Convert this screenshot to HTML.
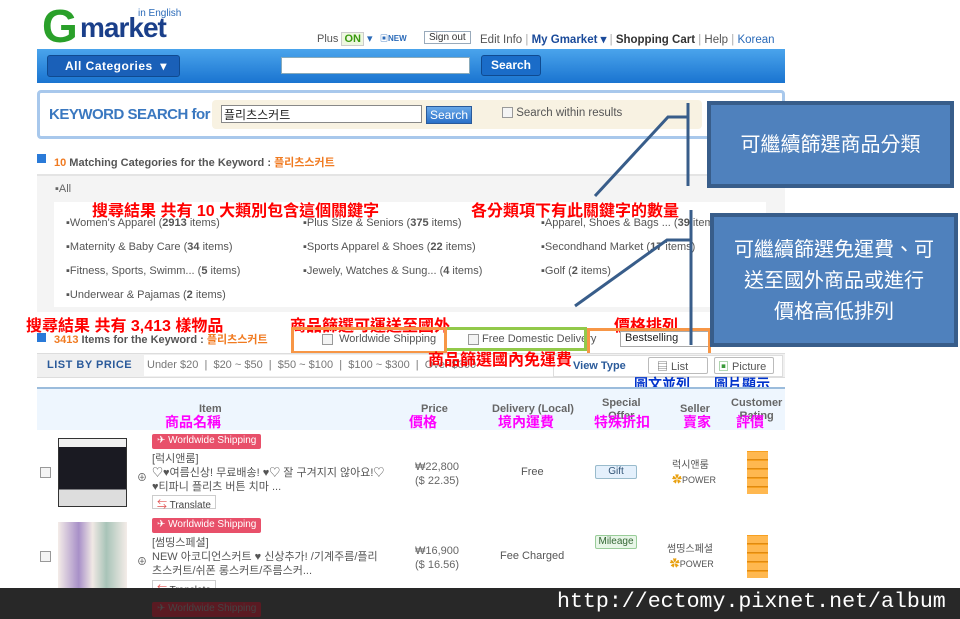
<!DOCTYPE html>
<html><head><meta charset="utf-8"><style>
*{margin:0;padding:0;box-sizing:border-box}
body{width:960px;height:619px;overflow:hidden;background:#fff;font-family:"Liberation Sans","Noto Sans CJK KR",sans-serif;font-size:11px;color:#555;position:relative}
.a{position:absolute;white-space:nowrap}
.red{color:#f00;font-family:"Liberation Sans","Noto Sans CJK TC",sans-serif;font-size:16px}
.mag{color:#f0f;font-family:"Liberation Sans","Noto Sans CJK TC",sans-serif;font-size:14px;font-weight:bold}
.blu{color:#0033cc;font-family:"Liberation Sans","Noto Sans CJK TC",sans-serif;font-size:14px;font-weight:bold}
.box{position:absolute;background:#4f81bd;border:4px solid #385d8a;color:#fff;font-family:"Liberation Sans","Noto Sans CJK TC",sans-serif;font-size:20px;text-align:center}
.cb{display:inline-block;width:11px;height:11px;border:1px solid #999;background:#f4f4f4;vertical-align:middle}
.ws{position:absolute;background:#e8506a;color:#fff;font-size:10px;padding:1px 5px;border-radius:2px;height:15px}
.tr{position:absolute;border:1px solid #ccc;font-size:10px;padding:0 4px;color:#444;height:14px}
.coin{position:absolute;left:747px;width:21px;height:43px;background:repeating-linear-gradient(#f7a020 0 1px,#ffb850 1px 8px,#e08a10 8px 9px)}
</style></head><body>
<!-- logo -->
<div class="a" style="left:42px;top:4px;font-size:46px;font-weight:bold;color:#2aa02a;line-height:44px">G</div>
<div class="a" style="left:80px;top:13px;font-size:28px;font-weight:bold;color:#1a3f8a;line-height:30px;letter-spacing:-1px">market</div>
<div class="a" style="left:138px;top:8px;font-size:10px;color:#2a6ab8">in English</div>
<div class="a" style="left:317px;top:32px;font-size:11px;color:#555">Plus <span style="background:#eef8e0;color:#3a9a10;font-weight:bold;border:1px solid #ccc;padding:0 2px">ON</span> <span style="color:#2a6ab8">▾</span></div>
<div class="a" style="left:380px;top:33px;font-size:8px;color:#2a6ab8;font-weight:bold">▣NEW</div>
<div class="a" style="left:424px;top:31px;font-size:10px;border:1px solid #9ab;padding:0 4px;color:#333">Sign out</div>
<div class="a" style="left:480px;top:32px;font-size:11.5px;color:#555">Edit Info <span style="color:#aaa">|</span> <b style="color:#1a4a9a">My Gmarket ▾</b> <span style="color:#aaa">|</span> <b style="color:#333">Shopping Cart</b> <span style="color:#aaa">|</span> Help <span style="color:#aaa">|</span> <span style="color:#2a6ab8">Korean</span></div>
<!-- blue bar -->
<div class="a" style="left:37px;top:49px;width:748px;height:34px;background:linear-gradient(#4aa4ec,#1a74d0)"></div>
<div class="a" style="left:47px;top:55px;width:133px;height:22px;background:#1a60b8;border:1px solid #0f4a90;border-radius:3px;color:#fff;font-weight:bold;font-size:12px;line-height:20px;padding-left:17px;letter-spacing:.5px">All Categories &nbsp;▾</div>
<div class="a" style="left:281px;top:57px;width:189px;height:17px;background:#fff;border:1px solid #8ab"></div>
<div class="a" style="left:481px;top:55px;width:60px;height:21px;background:#1a6cc8;border:1px solid #0f4a90;border-radius:3px;color:#fff;font-weight:bold;font-size:12px;line-height:19px;text-align:center">Search</div>
<!-- keyword search -->
<div class="a" style="left:37px;top:90px;width:748px;height:49px;border:3px solid #a8c8ec;border-radius:4px;background:#fff"></div>
<div class="a" style="left:212px;top:100px;width:490px;height:29px;background:#f8f2e2;border-radius:4px"></div>
<div class="a" style="left:49px;top:106px;font-size:15px;font-weight:bold;color:#3a78c0;letter-spacing:-.5px">KEYWORD SEARCH for</div>
<div class="a" style="left:221px;top:105px;width:201px;height:18px;background:#fff;border:1px solid #888;font-size:12px;color:#222;padding-left:2px">플리츠스커트</div>
<div class="a" style="left:426px;top:106px;width:46px;height:18px;background:linear-gradient(#6aa8e8,#2a70c8);border:1px solid #2a5a9a;color:#fff;font-size:12px;line-height:16px;text-align:center">Search</div>
<div class="a" style="left:502px;top:107px;font-size:11.5px;color:#555"><span class="cb"></span> Search within results</div>
<!-- matching categories -->
<div class="a" style="left:37px;top:154px;width:9px;height:9px;background:#2a7ad8"></div>
<div class="a" style="left:54px;top:154px;font-size:11px;font-weight:bold;color:#555"><span style="color:#f07a20">10</span> Matching Categories for the Keyword : <span style="color:#f07a20">플리츠스커트</span></div>
<div class="a" style="left:37px;top:174px;width:748px;height:2px;background:#e4e4e4"></div>
<div class="a" style="left:37px;top:176px;width:748px;height:136px;background:#f4f4f4"></div>
<div class="a" style="left:55px;top:183px;font-size:11px;color:#666">▪All</div>
<div class="a" style="left:54px;top:202px;width:712px;height:105px;background:#fff"></div>
<div class="a" style="left:66px;top:211px;font-size:11px;color:#555;line-height:24px">
▪Women's Apparel (<b>2913</b> items)<br>▪Maternity &amp; Baby Care (<b>34</b> items)<br>▪Fitness, Sports, Swimm... (<b>5</b> items)<br>▪Underwear &amp; Pajamas (<b>2</b> items)</div>
<div class="a" style="left:303px;top:211px;font-size:11px;color:#555;line-height:24px">
▪Plus Size &amp; Seniors (<b>375</b> items)<br>▪Sports Apparel &amp; Shoes (<b>22</b> items)<br>▪Jewely, Watches &amp; Sung... (<b>4</b> items)</div>
<div class="a" style="left:541px;top:211px;font-size:11px;color:#555;line-height:24px">
▪Apparel, Shoes &amp; Bags ... (<b>39</b> items)<br>▪Secondhand Market (<b>17</b> items)<br>▪Golf (<b>2</b> items)</div>
<div class="a red" style="left:92px;top:197px;font-weight:bold">搜尋結果 共有 10 大類別包含這個關鍵字</div>
<div class="a red" style="left:471px;top:197px;font-weight:bold">各分類項下有此關鍵字的數量</div>
<!-- items row -->
<div class="a red" style="left:26px;top:312px;font-weight:bold">搜尋結果 共有 3,413 樣物品</div>
<div class="a red" style="left:290px;top:312px;font-weight:bold">商品篩選可運送至國外</div>
<div class="a red" style="left:614px;top:312px;font-weight:bold">價格排列</div>
<div class="a" style="left:37px;top:333px;width:9px;height:9px;background:#2a7ad8"></div>
<div class="a" style="left:54px;top:331px;font-size:11px;font-weight:bold;color:#555"><span style="color:#f07a20">3413</span> Items for the Keyword : <span style="color:#f07a20">플리츠스커트</span></div>
<div class="a" style="left:322px;top:333px;font-size:11px;color:#555"><span class="cb"></span> &nbsp;Worldwide Shipping</div>
<div class="a" style="left:468px;top:333px;font-size:11px;color:#555"><span class="cb"></span> Free Domestic Delivery</div>
<div class="a" style="left:620px;top:331px;width:90px;height:16px;border:1px solid #aaa;background:#fff;font-size:11px;color:#222;padding-left:4px">Bestselling</div>
<div class="a" style="left:291px;top:327px;width:156px;height:27px;border:3px solid #f79646"></div>
<div class="a" style="left:447px;top:327px;width:140px;height:24px;border:3px solid #92c94a;border-left:none"></div>
<div class="a" style="left:587px;top:328px;width:124px;height:28px;border:3px solid #f79646"></div>
<!-- list by price -->
<div class="a" style="left:37px;top:353px;width:748px;height:25px;background:#f0f0f0;border-top:1px solid #ddd;border-bottom:1px solid #ddd"></div>
<div class="a" style="left:47px;top:359px;font-size:11px;font-weight:bold;color:#2a5a9a;letter-spacing:.5px">LIST BY PRICE</div>
<div class="a" style="left:144px;top:355px;width:425px;height:21px;background:#fff"></div>
<div class="a" style="left:147px;top:359px;font-size:11px;color:#777">Under $20 &nbsp;| &nbsp;$20 ~ $50 &nbsp;| &nbsp;$50 ~ $100 &nbsp;| &nbsp;$100 ~ $300 &nbsp;| &nbsp;Over $300</div>
<div class="a" style="left:553px;top:355px;width:230px;height:22px;background:#fff;border:1px solid #ddd"></div>
<div class="a" style="left:573px;top:360px;font-size:11px;font-weight:bold;color:#2a5a9a">View Type</div>
<div class="a" style="left:648px;top:357px;width:60px;height:17px;border:1px solid #bbb;border-radius:2px;background:#fff;font-size:11px;padding-left:8px">▤ List</div>
<div class="a" style="left:714px;top:357px;width:60px;height:17px;border:1px solid #bbb;border-radius:2px;background:#fff;font-size:11px;padding-left:3px"><span style="color:#3a9a3a">▣</span> Picture</div>
<div class="a red" style="left:428px;top:346px;font-weight:bold">商品篩選國內免運費</div>
<div class="a blu" style="left:634px;top:374px">圖文並列</div>
<div class="a blu" style="left:714px;top:374px">圖片顯示</div>
<!-- table header -->
<div class="a" style="left:37px;top:387px;width:748px;height:43px;background:#eef6fe;border-top:2px solid #9bbcdc"></div>
<div class="a" style="left:199px;top:403px;font-size:11px;font-weight:bold;color:#666">Item</div>
<div class="a" style="left:421px;top:403px;font-size:11px;font-weight:bold;color:#666">Price</div>
<div class="a" style="left:492px;top:403px;font-size:11px;font-weight:bold;color:#666">Delivery (Local)</div>
<div class="a" style="left:602px;top:397px;font-size:11px;font-weight:bold;color:#666;text-align:center;line-height:13px">Special<br>Offer</div>
<div class="a" style="left:680px;top:403px;font-size:11px;font-weight:bold;color:#666">Seller</div>
<div class="a" style="left:731px;top:397px;font-size:11px;font-weight:bold;color:#666;text-align:center;line-height:13px">Customer<br>Rating</div>
<div class="a mag" style="left:165px;top:412px">商品名稱</div>
<div class="a mag" style="left:409px;top:412px">價格</div>
<div class="a mag" style="left:498px;top:412px">境內運費</div>
<div class="a mag" style="left:594px;top:412px">特殊折扣</div>
<div class="a mag" style="left:683px;top:412px">賣家</div>
<div class="a mag" style="left:736px;top:412px">評價</div>
<!-- row 1 -->
<div class="a" style="left:40px;top:466px"><span class="cb"></span></div>
<div class="a" style="left:58px;top:438px;width:69px;height:69px;border:1px solid #333;background:linear-gradient(#f0f0f0 0 12%,#1a1a22 12% 75%,#ddd 75%)"></div>
<div class="a" style="left:137px;top:469px;font-size:10px">⊕</div>
<div class="ws" style="left:152px;top:434px">✈ Worldwide Shipping</div>
<div class="a" style="left:152px;top:452px;font-size:11px;color:#555;line-height:14px">[럭시앤룸]<br>♡♥여름신상! 무료배송! ♥♡ 잘 구겨지지 않아요!♡<br>♥티파니 플리츠 버튼 치마 ...</div>
<div class="tr" style="left:152px;top:495px"><span style="color:#e05050">⇆</span> Translate</div>
<div class="a" style="left:415px;top:460px;font-size:11px;color:#666;text-align:center;line-height:14px">₩22,800<br>($ 22.35)</div>
<div class="a" style="left:521px;top:466px;font-size:11px;color:#555">Free</div>
<div class="a" style="left:595px;top:465px;width:42px;height:14px;border:1px solid #9bc;background:#e4f0fc;border-radius:2px;font-size:10px;text-align:center;color:#357">Gift</div>
<div class="a" style="left:672px;top:459px;font-size:10px;color:#555;line-height:14px">럭시앤룸<br><span style="color:#e8a010">✿</span><span style="font-size:9px">POWER</span></div>
<div class="coin" style="top:451px"></div>
<!-- row 2 -->
<div class="a" style="left:40px;top:550px"><span class="cb"></span></div>
<div class="a" style="left:58px;top:522px;width:69px;height:66px;background:linear-gradient(90deg,#f4ece8,#a890c8 30%,#f0e8e4 50%,#a8c4b8 70%,#f4ece8)"></div>
<div class="a" style="left:137px;top:553px;font-size:10px">⊕</div>
<div class="ws" style="left:152px;top:518px">✈ Worldwide Shipping</div>
<div class="a" style="left:152px;top:536px;font-size:11px;color:#555;line-height:14px">[썸띵스페셜]<br>NEW 아코디언스커트 ♥ 신상추가! /기계주름/플리<br>츠스커트/쉬폰 롱스커트/주름스커...</div>
<div class="tr" style="left:152px;top:580px"><span style="color:#e05050">⇆</span> Translate</div>
<div class="a" style="left:415px;top:544px;font-size:11px;color:#666;text-align:center;line-height:14px">₩16,900<br>($ 16.56)</div>
<div class="a" style="left:500px;top:550px;font-size:11px;color:#555">Fee Charged</div>
<div class="a" style="left:595px;top:535px;width:42px;height:14px;border:1px solid #9c9;background:#e8f6e8;border-radius:2px;font-size:10px;text-align:center;color:#363">Mileage</div>
<div class="a" style="left:667px;top:543px;font-size:10px;color:#555;line-height:14px">썸띵스페셜<br>&nbsp;<span style="color:#e8a010">✿</span><span style="font-size:9px">POWER</span></div>
<div class="coin" style="top:535px"></div>
<!-- bottom bar -->
<div class="a" style="left:0;top:588px;width:960px;height:31px;background:#282828"></div>
<div class="ws" style="left:152px;top:602px;background:#5a1a22;color:#444">✈ Worldwide Shipping</div>
<div class="a" style="left:557px;top:590px;font-family:'Liberation Mono',monospace;font-size:21.6px;color:#fff">http://ectomy.pixnet.net/album</div>
<!-- callout lines -->
<svg class="a" style="left:0;top:0" width="960" height="619"><g stroke="#385d8a" stroke-width="3" fill="none">
<polyline points="595,196 668,117 688,117"/><line x1="688" y1="103" x2="688" y2="186"/>
<polyline points="575,306 667,240 691,240"/><line x1="691" y1="210" x2="691" y2="345"/></g></svg>
<div class="box" style="left:707px;top:101px;width:247px;height:87px;line-height:80px">可繼續篩選商品分類</div>
<div class="box" style="left:710px;top:213px;width:248px;height:134px;padding-top:18px;line-height:31px">可繼續篩選免運費、可<br>送至國外商品或進行<br>價格高低排列</div>
</body></html>
